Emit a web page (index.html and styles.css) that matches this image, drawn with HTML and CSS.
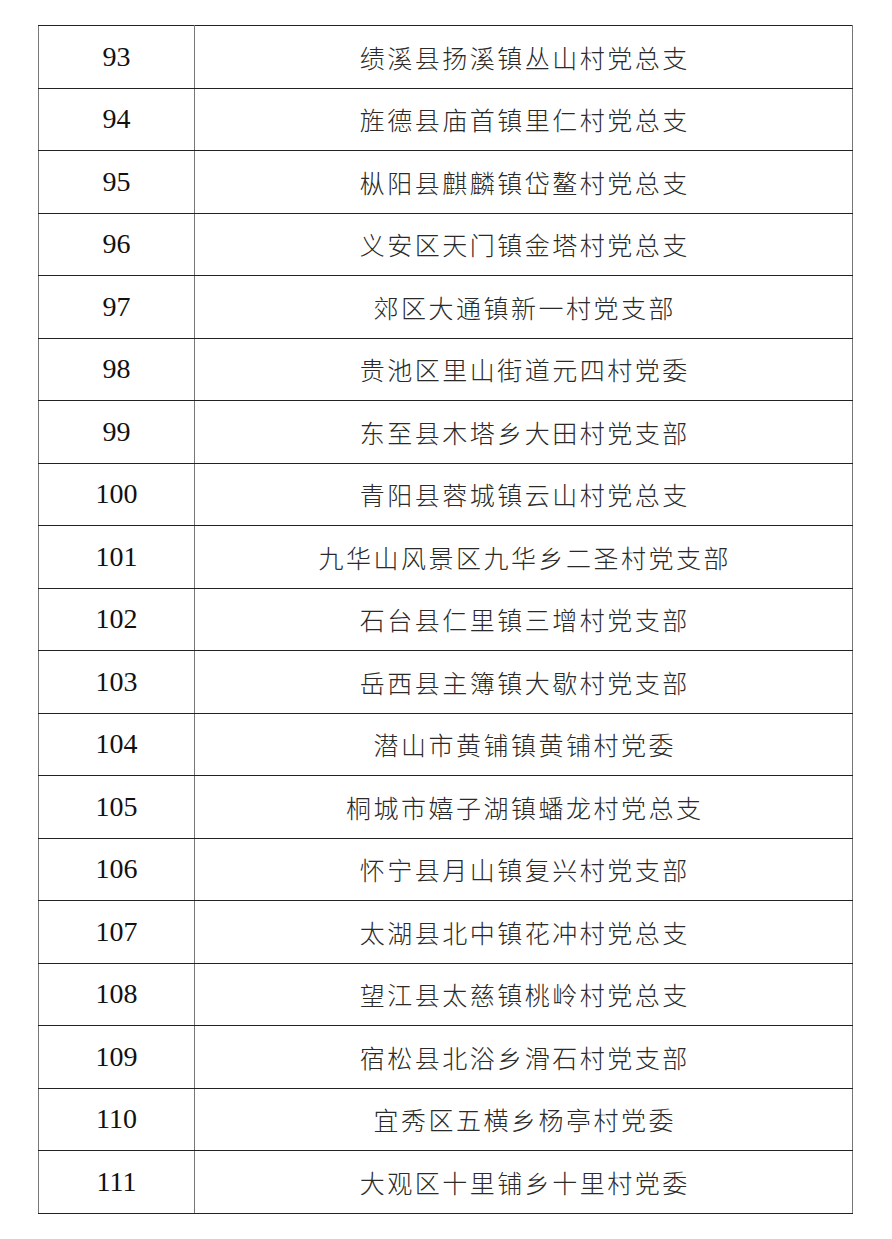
FILE: index.html
```html
<!DOCTYPE html>
<html lang="zh">
<head>
<meta charset="utf-8">
<link rel="stylesheet" href="styles.css">
</head>
<body>
<table class="list">
<colgroup><col class="c-num"><col class="c-name"></colgroup>
<tbody>
<tr><td class="num">93</td><td class="name">绩溪县扬溪镇丛山村党总支</td></tr>
<tr><td class="num">94</td><td class="name">旌德县庙首镇里仁村党总支</td></tr>
<tr><td class="num">95</td><td class="name">枞阳县麒麟镇岱鳌村党总支</td></tr>
<tr><td class="num">96</td><td class="name">义安区天门镇金塔村党总支</td></tr>
<tr><td class="num">97</td><td class="name">郊区大通镇新一村党支部</td></tr>
<tr><td class="num">98</td><td class="name">贵池区里山街道元四村党委</td></tr>
<tr><td class="num">99</td><td class="name">东至县木塔乡大田村党支部</td></tr>
<tr><td class="num">100</td><td class="name">青阳县蓉城镇云山村党总支</td></tr>
<tr><td class="num">101</td><td class="name">九华山风景区九华乡二圣村党支部</td></tr>
<tr><td class="num">102</td><td class="name">石台县仁里镇三增村党支部</td></tr>
<tr><td class="num">103</td><td class="name">岳西县主簿镇大歇村党支部</td></tr>
<tr><td class="num">104</td><td class="name">潜山市黄铺镇黄铺村党委</td></tr>
<tr><td class="num">105</td><td class="name">桐城市嬉子湖镇蟠龙村党总支</td></tr>
<tr><td class="num">106</td><td class="name">怀宁县月山镇复兴村党支部</td></tr>
<tr><td class="num">107</td><td class="name">太湖县北中镇花冲村党总支</td></tr>
<tr><td class="num">108</td><td class="name">望江县太慈镇桃岭村党总支</td></tr>
<tr><td class="num">109</td><td class="name">宿松县北浴乡滑石村党支部</td></tr>
<tr><td class="num">110</td><td class="name">宜秀区五横乡杨亭村党委</td></tr>
<tr><td class="num">111</td><td class="name">大观区十里铺乡十里村党委</td></tr>
</tbody>
</table>
</body>
</html>
```
FILE: styles.css
```css
html, body {
  margin: 0;
  padding: 0;
  background: #ffffff;
}
body {
  padding: 25px 0 0 38px;
}
.list {
  border-collapse: collapse;
  width: 815px;
  table-layout: fixed;
  color: #111;
}
.c-num { width: 156px; }
.list tr { height: 62.5px; }
.list td {
  border-top: 1px solid #222;
  border-bottom: 1px solid #222;
  border-left: 1px solid #777;
  border-right: 1px solid #777;
  text-align: center;
  vertical-align: middle;
  padding: 0;
}
.num {
  font-family: "Liberation Serif", "Times New Roman", serif;
  font-size: 28px;
  padding-top: 2px;
}
.name {
  font-family: "Noto Sans CJK SC", "Noto Sans CJK JP", sans-serif;
  font-weight: 300;
  font-size: 25px;
  letter-spacing: 2.5px;
  text-indent: 2.5px;
  color: #2a2a2a;
}
```
